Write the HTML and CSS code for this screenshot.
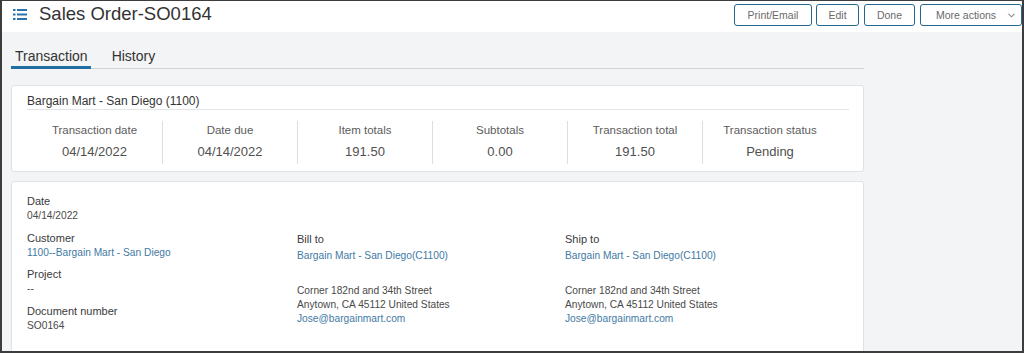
FILE: index.html
```html
<!DOCTYPE html>
<html lang="en">
  <head>
    <meta charset="UTF-8" />
    <meta name="viewport" content="width=device-width, initial-scale=1.0" />
    <title>Sales Order-SO0164</title>
    <link rel="stylesheet" href="styles.css">
  </head>
  <body>
    <div class="frame">
      <div class="header">
        <svg class="list-icon" width="14" height="11" viewBox="0 0 14 11">
          <rect x="0" y="0" width="2.5" height="2" />
          <rect x="4" y="0" width="10" height="2" />
          <rect x="0" y="4.5" width="2.5" height="2" />
          <rect x="4" y="4.5" width="10" height="2" />
          <rect x="0" y="9" width="2.5" height="2" />
          <rect x="4" y="9" width="10" height="2" />
        </svg>
        <h1 class="title">Sales Order-SO0164</h1>
        <div class="actions">
          <button class="btn print">Print/Email</button>
          <button class="btn edit">Edit</button>
          <button class="btn done">Done</button>
          <button class="btn more">More actions
            <svg width="7" height="5" viewBox="0 0 7 5"><polyline points="0.5,0.8 3.5,3.8 6.5,0.8" /></svg>
          </button>
        </div>
      </div>

      <div class="main">
        <div class="tabs">
          <div class="tab active">Transaction</div>
          <div class="tab">History</div>
        </div>

        <div class="card summary">
          <div class="summary-title">Bargain Mart - San Diego (1100)</div>
          <div class="stats">
            <div class="stat">
              <div class="stat-label">Transaction date</div>
              <div class="stat-value">04/14/2022</div>
            </div>
            <div class="stat">
              <div class="stat-label">Date due</div>
              <div class="stat-value">04/14/2022</div>
            </div>
            <div class="stat">
              <div class="stat-label">Item totals</div>
              <div class="stat-value">191.50</div>
            </div>
            <div class="stat">
              <div class="stat-label">Subtotals</div>
              <div class="stat-value">0.00</div>
            </div>
            <div class="stat">
              <div class="stat-label">Transaction total</div>
              <div class="stat-value">191.50</div>
            </div>
            <div class="stat">
              <div class="stat-label">Transaction status</div>
              <div class="stat-value">Pending</div>
            </div>
          </div>
        </div>

        <div class="card details">
          <div class="col col-main">
            <div class="field">
              <div class="label">Date</div>
              <div class="value">04/14/2022</div>
            </div>
            <div class="field">
              <div class="label">Customer</div>
              <div class="value link">1100--Bargain Mart - San Diego</div>
            </div>
            <div class="field">
              <div class="label">Project</div>
              <div class="value">--</div>
            </div>
            <div class="field">
              <div class="label">Document number</div>
              <div class="value">SO0164</div>
            </div>
          </div>
          <div class="col col-addr bill">
            <div class="label">Bill to</div>
            <div class="addr-name link">Bargain Mart - San Diego(C1100)</div>
            <div class="addr-lines">
              <div>Corner 182nd and 34th Street</div>
              <div>Anytown, CA 45112 United States</div>
              <div class="link">Jose@bargainmart.com</div>
            </div>
          </div>
          <div class="col col-addr">
            <div class="label">Ship to</div>
            <div class="addr-name link">Bargain Mart - San Diego(C1100)</div>
            <div class="addr-lines">
              <div>Corner 182nd and 34th Street</div>
              <div>Anytown, CA 45112 United States</div>
              <div class="link">Jose@bargainmart.com</div>
            </div>
          </div>
        </div>
      </div>
    </div>
  </body>
</html>
```

FILE: styles.css
```css
html,
body {
  margin: 0;
  height: 100%;
  overflow: hidden;
  font-family: "Liberation Sans", Arial, sans-serif;
}
.frame {
  width: 1024px;
  height: 353px;
  box-sizing: border-box;
  border: 2px solid #3d3d3d;
  border-top-width: 1px;
  display: flex;
  flex-direction: column;
  overflow: hidden;
  background: #f2f4f5;
}

/* header */
.header {
  height: 31px;
  flex: none;
  box-sizing: border-box;
  padding-top: 3px;
  display: flex;
  align-items: flex-start;
  background: #fff;
}
.list-icon {
  fill: #2a72aa;
  margin: 5px 0 0 11px;
}
.title {
  margin: 0 0 0 12px;
  font-size: 18.5px;
  font-weight: normal;
  line-height: 20px;
  color: #333;
}
.actions {
  margin-left: auto;
  display: flex;
  gap: 5px;
}
.btn {
  height: 22px;
  padding: 0;
  background: #fff;
  border: 1px solid #24688f;
  border-radius: 3px;
  font-family: inherit;
  font-size: 10.5px;
  color: #6a6a6a;
  display: flex;
  align-items: center;
  justify-content: center;
}
.btn.print {
  width: 78px;
  margin-right: -1px;
}
.btn.edit {
  width: 43px;
}
.btn.done {
  width: 51px;
}
.btn.more {
  width: 102px;
  justify-content: flex-start;
  padding-left: 15px;
  gap: 12px;
}
.btn.more svg {
  fill: none;
  stroke: #8a8a8a;
  stroke-width: 1.1;
}

/* main */
.main {
  flex: 1;
  padding-left: 9px;
  width: 853px;
}
.tabs {
  display: flex;
  gap: 17px;
  padding-top: 16px;
  border-bottom: 1px solid #cdd4d9;
}
.tab {
  padding: 0 3px 2px 4px;
  font-size: 14px;
  line-height: 16px;
  color: #333;
  border-bottom: 3px solid transparent;
  margin-bottom: -1px;
}
.tab.active {
  border-bottom-color: #1f6fa3;
}

.card {
  background: #fff;
  border: 1px solid #dde2e6;
  border-radius: 3px;
  box-sizing: border-box;
}
.summary {
  margin-top: 16px;
  height: 87px;
  padding: 8px 14px 0 15px;
}
.summary-title {
  font-size: 12px;
  line-height: 15px;
  color: #333;
  border-bottom: 1px solid #e1e5e8;
}
.stats {
  display: grid;
  grid-template-columns: repeat(6, 135px);
  margin-top: 11px;
}
.stat {
  height: 43px;
  padding-top: 2px;
  box-sizing: border-box;
  text-align: center;
  border-left: 1px solid #dadfe2;
}
.stat:first-child {
  border-left: none;
}
.stat-label {
  font-size: 11.5px;
  line-height: 14px;
  color: #5c5c5c;
}
.stat-value {
  margin-top: 7px;
  font-size: 13px;
  line-height: 16px;
  color: #505050;
}

.details {
  margin-top: 9px;
  height: 200px;
  padding: 12px 0 0 15px;
  display: flex;
}
.col-main {
  width: 270px;
}
.col-addr {
  width: 268px;
  margin-top: 38px;
}
.field {
  margin-bottom: 7.5px;
}
.label {
  font-size: 11px;
  line-height: 14px;
  color: #3a3a3a;
}
.value {
  font-size: 10.2px;
  line-height: 15px;
  color: #4a4a4a;
}
.addr-name {
  margin-top: 3px;
  font-size: 10.2px;
  line-height: 14px;
}
.addr-lines {
  margin-top: 21px;
  font-size: 10.2px;
  line-height: 14px;
  color: #4a4a4a;
}
.link {
  color: #3f7aa5;
}
```
